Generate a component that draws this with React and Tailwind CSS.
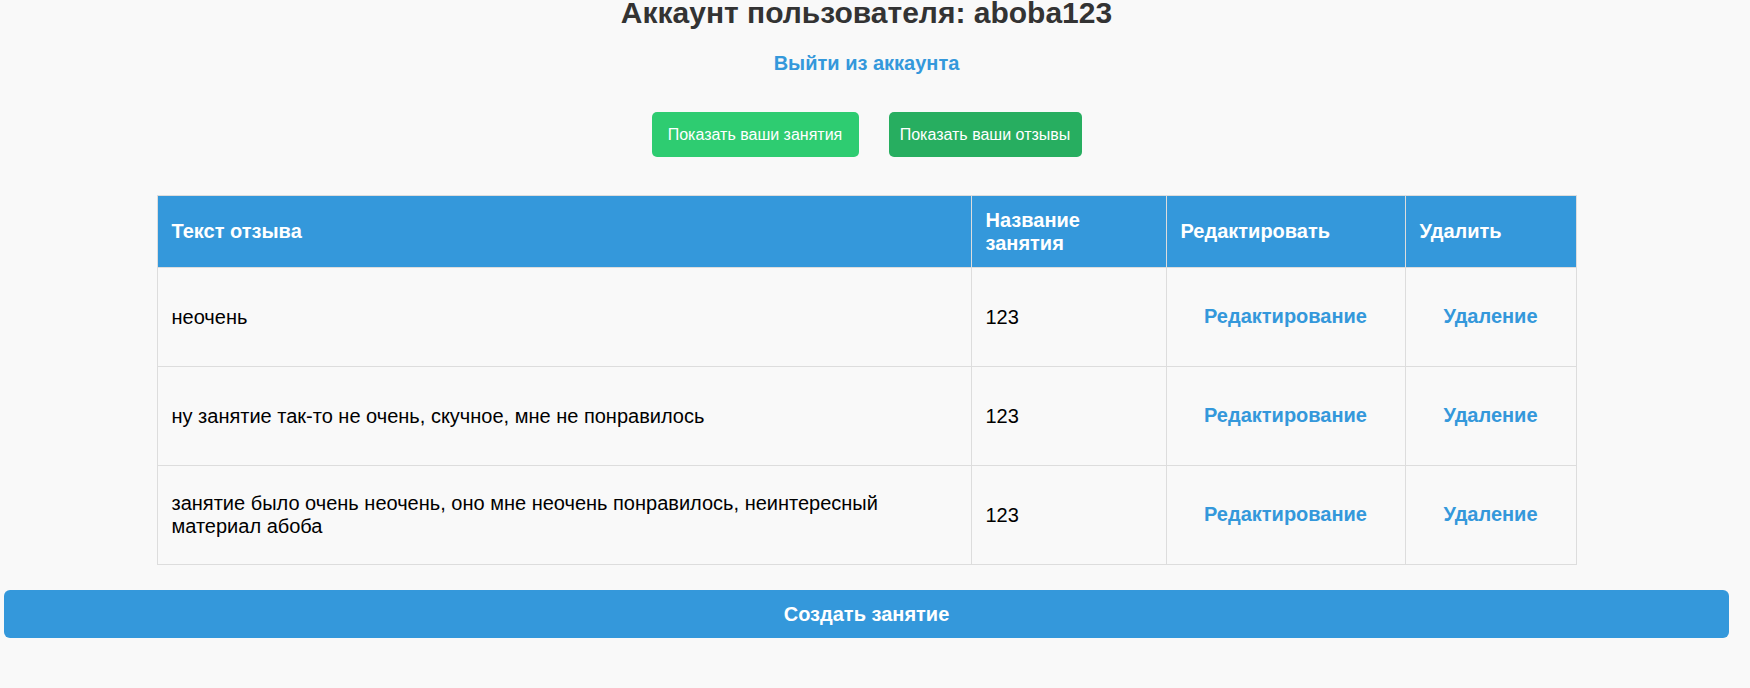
import React from "react";

const rows = [
  { text: "неочень", lesson: "123" },
  { text: "ну занятие так-то не очень, скучное, мне не понравилось", lesson: "123" },
  {
    text: "занятие было очень неочень, оно мне неочень понравилось, неинтересный материал абоба",
    lesson: "123",
  },
];

export default function App() {
  return (
    <div className="min-h-screen bg-[#f9f9f9] font-['Liberation_Sans',Arial,sans-serif] overflow-hidden">
      <div className="w-[1733px] flex flex-col items-center">
        <h1 className="mt-[-5px] text-center text-[30px] leading-[35px] font-bold text-[#333]">
          Аккаунт пользователя: aboba123
        </h1>
        <a href="#" className="mt-[21px] text-[20px] leading-[24px] font-bold text-[#3498db]">
          Выйти из аккаунта
        </a>
        <div className="mt-[37px] flex gap-[30px]">
          <button className="h-[45px] w-[207px] rounded-[5px] bg-[#2ecc71] text-white text-[16px] text-center">
            Показать ваши занятия
          </button>
          <button className="h-[45px] w-[193px] rounded-[5px] bg-[#27ae60] text-white text-[16px] text-center">
            Показать ваши отзывы
          </button>
        </div>
        <table className="mt-[38px] w-[1419px] table-fixed border-collapse">
          <colgroup>
            <col className="w-[814px]" />
            <col className="w-[195px]" />
            <col className="w-[239px]" />
            <col className="w-[171px]" />
          </colgroup>
          <thead>
            <tr className="bg-[#3498db] text-white">
              <th className="h-[72px] border border-[#ddd] px-[14px] text-left text-[20px] leading-[23px] font-bold">
                Текст отзыва
              </th>
              <th className="h-[72px] border border-[#ddd] px-[14px] text-left text-[20px] leading-[23px] font-bold">
                Название занятия
              </th>
              <th className="h-[72px] border border-[#ddd] px-[14px] text-left text-[20px] leading-[23px] font-bold">
                Редактировать
              </th>
              <th className="h-[72px] border border-[#ddd] px-[14px] text-left text-[20px] leading-[23px] font-bold">
                Удалить
              </th>
            </tr>
          </thead>
          <tbody>
            {rows.map((r, i) => (
              <tr key={i}>
                <td className="h-[99px] border border-[#ddd] px-[14px] text-[20px] leading-[23px] text-black">
                  <div className="max-w-[720px]">{r.text}</div>
                </td>
                <td className="h-[99px] border border-[#ddd] px-[14px] text-[20px] leading-[23px] text-black">
                  {r.lesson}
                </td>
                <td className="h-[99px] border border-[#ddd] px-[14px] text-center">
                  <a href="#" className="text-[20px] leading-[23px] font-bold text-[#3498db]">
                    Редактирование
                  </a>
                </td>
                <td className="h-[99px] border border-[#ddd] px-[14px] text-center">
                  <a href="#" className="text-[20px] leading-[23px] font-bold text-[#3498db]">
                    Удаление
                  </a>
                </td>
              </tr>
            ))}
          </tbody>
        </table>
        <button className="mt-[25px] w-[1725px] h-[48px] rounded-[6px] bg-[#3498db] text-white text-[20px] font-bold">
          Создать занятие
        </button>
      </div>
    </div>
  );
}
